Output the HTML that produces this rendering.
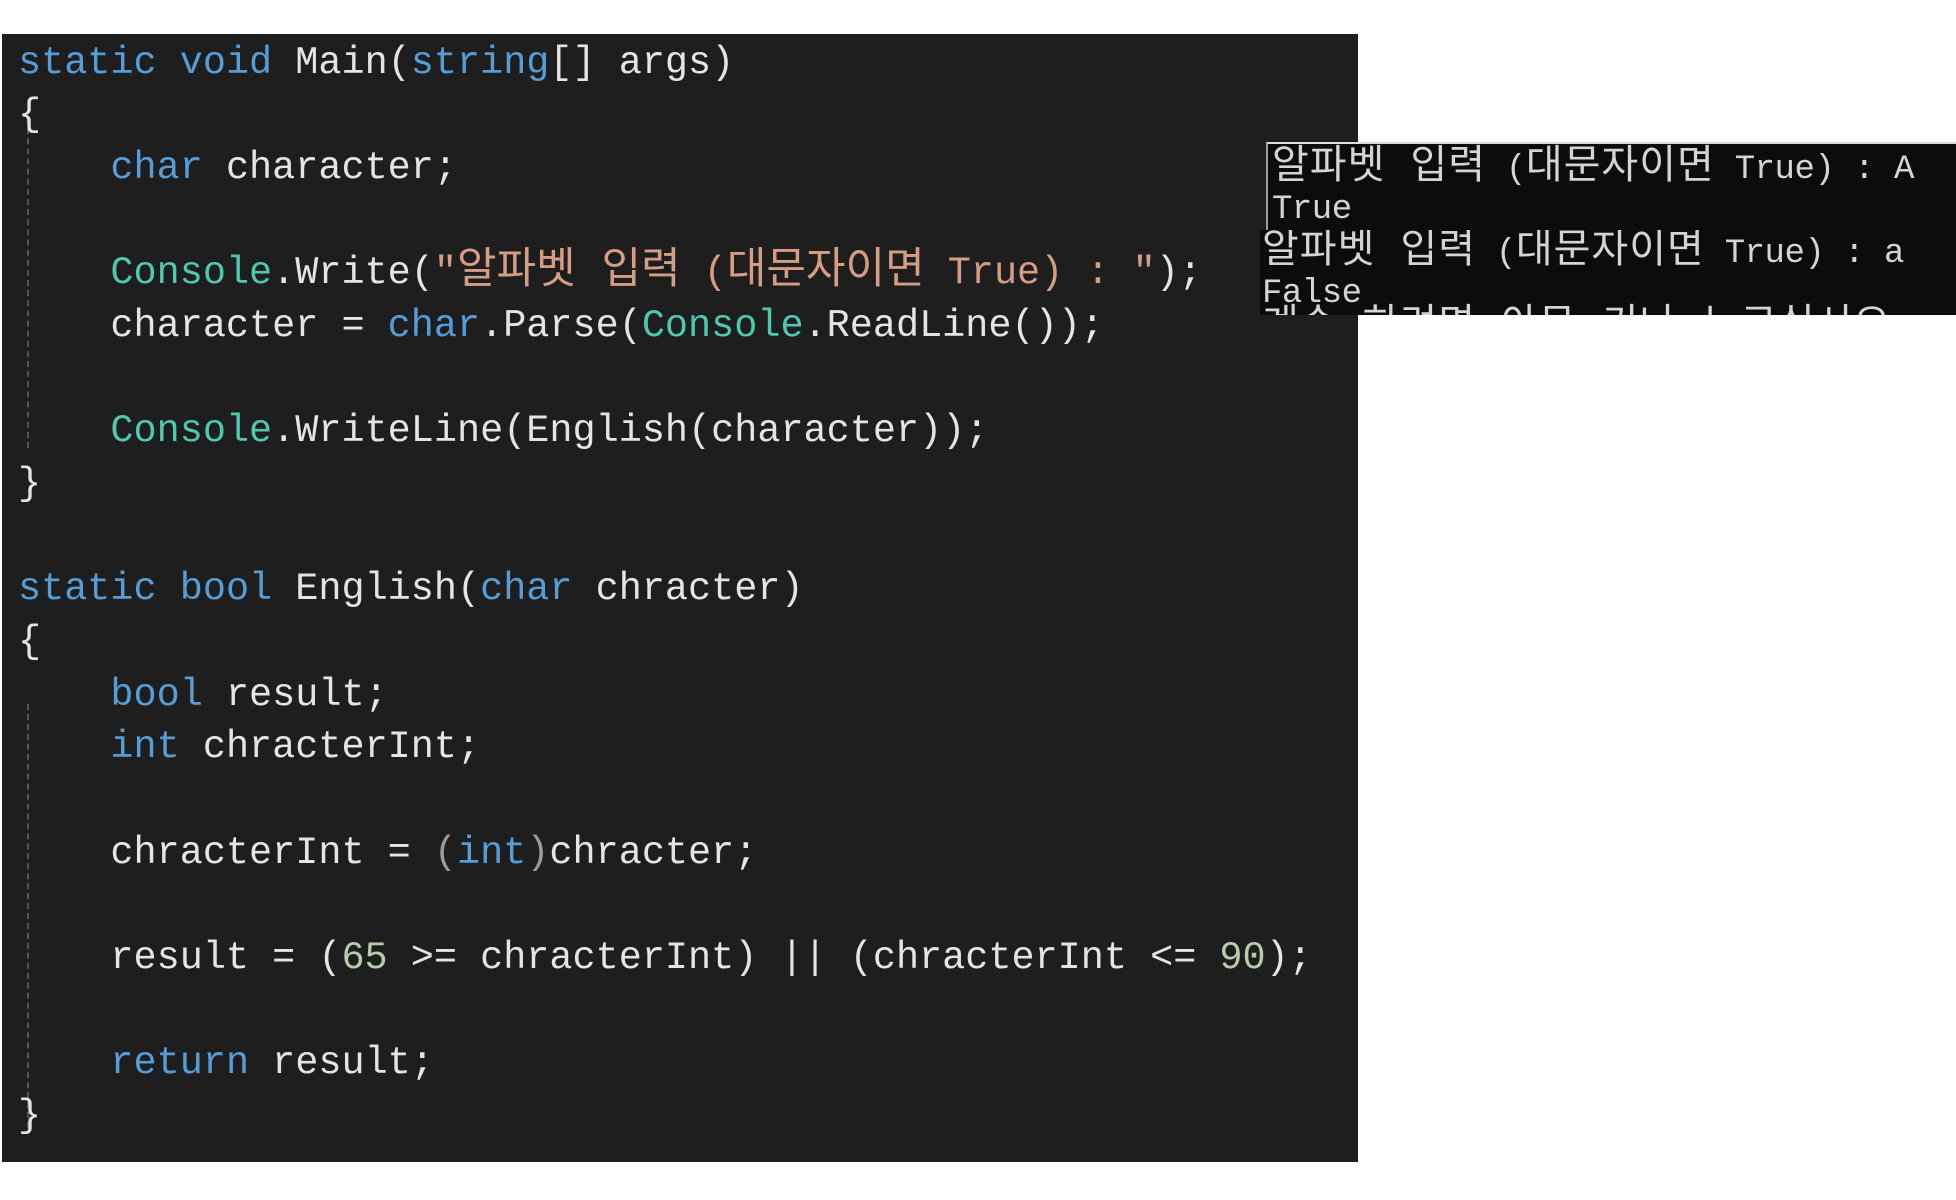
<!DOCTYPE html>
<html><head><meta charset="utf-8"><style>
html,body{margin:0;padding:0;background:#fff;width:1956px;height:1200px;overflow:hidden;position:relative}
#code{position:absolute;left:2px;top:34px;width:1356px;height:1128px;background:#1e1e1e}
.l{position:absolute;left:16px;white-space:pre;font-family:"Liberation Mono","Noto Sans CJK KR",monospace;font-size:38.5px;line-height:52px;color:#e4e4e4}
.k{color:#569cd6}.t{color:#4ec9b0}.s{color:#d69d85}.n{color:#b5cea8}.p{color:#9b9b9b}
.kr{font-size:43px;line-height:40px}
.g{position:absolute;left:25px;width:0;border-left:2px dashed #555}
.con{position:absolute;background:#0c0c0c;overflow:hidden}
.c{position:absolute;white-space:pre;font-family:"Liberation Mono","Noto Sans CJK KR",monospace;font-size:34px;line-height:42px;color:#d4d4d4;letter-spacing:-0.5px}
.c .kr{font-size:40px;line-height:40px;letter-spacing:1px}
</style></head><body>
<div id="code">
<div class="g" style="top:84px;height:330px"></div>
<div class="g" style="top:670px;height:424px"></div>
<div class="l" style="top:3px"><span class="k">static</span> <span class="k">void</span> Main(<span class="k">string</span>[] args)</div>
<div class="l" style="top:55px">{</div>
<div class="l" style="top:108px">    <span class="k">char</span> character;</div>
<div class="l" style="top:213px">    <span class="t">Console</span>.Write(<span class="s">"<span class="kr">알파벳 입력</span> (<span class="kr">대문자이면</span> True) : "</span>);</div>
<div class="l" style="top:266px">    character = <span class="k">char</span>.Parse(<span class="t">Console</span>.ReadLine());</div>
<div class="l" style="top:371px">    <span class="t">Console</span>.WriteLine(English(character));</div>
<div class="l" style="top:424px">}</div>
<div class="l" style="top:529px"><span class="k">static</span> <span class="k">bool</span> English(<span class="k">char</span> chracter)</div>
<div class="l" style="top:582px">{</div>
<div class="l" style="top:635px">    <span class="k">bool</span> result;</div>
<div class="l" style="top:687px">    <span class="k">int</span> chracterInt;</div>
<div class="l" style="top:793px">    chracterInt = <span class="p">(</span><span class="k">int</span><span class="p">)</span>chracter;</div>
<div class="l" style="top:898px">    result = (<span class="n">65</span> &gt;= chracterInt) || (chracterInt &lt;= <span class="n">90</span>);</div>
<div class="l" style="top:1003px">    <span class="k">return</span> result;</div>
<div class="l" style="top:1056px">}</div>
</div>
<div class="con" style="left:1266px;top:142px;width:690px;height:88px;border-left:2px solid #999;border-top:2px solid #ddd">
<div class="c" style="left:4px;top:5px"><span class="kr">알파벳 입력</span> (<span class="kr">대문자이면</span> True) : A</div>
<div class="c" style="left:4px;top:45px">True</div>
</div>
<div class="con" style="left:1260px;top:230px;width:696px;height:85px">
<div class="c" style="left:2px;top:3px"><span class="kr">알파벳 입력</span> (<span class="kr">대문자이면</span> True) : a</div>
<div class="c" style="left:2px;top:43px">False</div>
<div class="c" style="left:2px;top:78px"><span class="kr">계속 하려면 아무 키나 누르십시오</span></div>
</div>
</body></html>
